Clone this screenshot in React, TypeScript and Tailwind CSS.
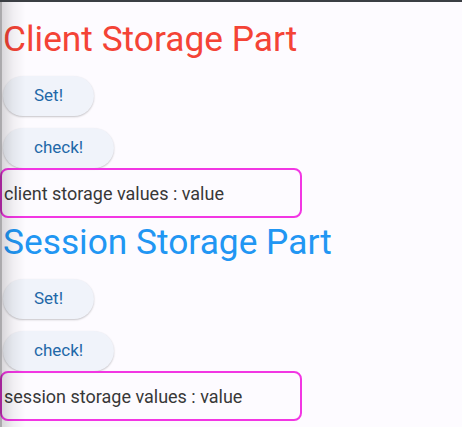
import React from "react";

type StoragePartProps = {
  title: string;
  titleClass: string;
  label: string;
};

function PillButton({ children }: { children: React.ReactNode }) {
  return (
    <button className="flex h-[40px] items-center justify-center rounded-full bg-[#f0f3fa] px-[31px] text-[17px] text-[#1f68a8] shadow-[0_1px_2px_rgba(0,0,0,0.22)]">
      {children}
    </button>
  );
}

function StoragePart({ title, titleClass, label }: StoragePartProps) {
  return (
    <section className="flex flex-col">
      <h1 className={`pl-[3px] text-[35.3px] leading-[41px] ${titleClass}`}>{title}</h1>
      <div className="mt-[16px] flex flex-col items-start gap-[12px] pl-[3px]">
        <PillButton>Set!</PillButton>
        <PillButton>check!</PillButton>
      </div>
      <div className="flex h-[50px] w-[302px] items-center rounded-[8px] border-[2.5px] border-[#f236e3] pl-[2px] text-[18px] text-[#383838]">
        {label}
      </div>
    </section>
  );
}

export default function App() {
  return (
    <div className="relative h-[427px] w-[462px] overflow-hidden bg-[#fdfbff] font-['Roboto',sans-serif]">
      <div className="h-[2px] bg-[#3b3f44]" />
      <div className="flex flex-col gap-[4px] pt-[17px]">
        <StoragePart
          title="Client Storage Part"
          titleClass="text-[#f44336]"
          label="client storage values : value"
        />
        <StoragePart
          title="Session Storage Part"
          titleClass="text-[#2196f3]"
          label="session storage values : value"
        />
      </div>
      <div className="pointer-events-none absolute top-[2px] bottom-0 left-0 w-[26px] bg-gradient-to-r from-[rgba(0,0,0,0.16)] via-[rgba(0,0,0,0.05)] to-transparent" />
      <div className="pointer-events-none absolute top-[2px] bottom-0 left-0 w-[2px] bg-[rgba(0,0,0,0.2)]" />
    </div>
  );
}
